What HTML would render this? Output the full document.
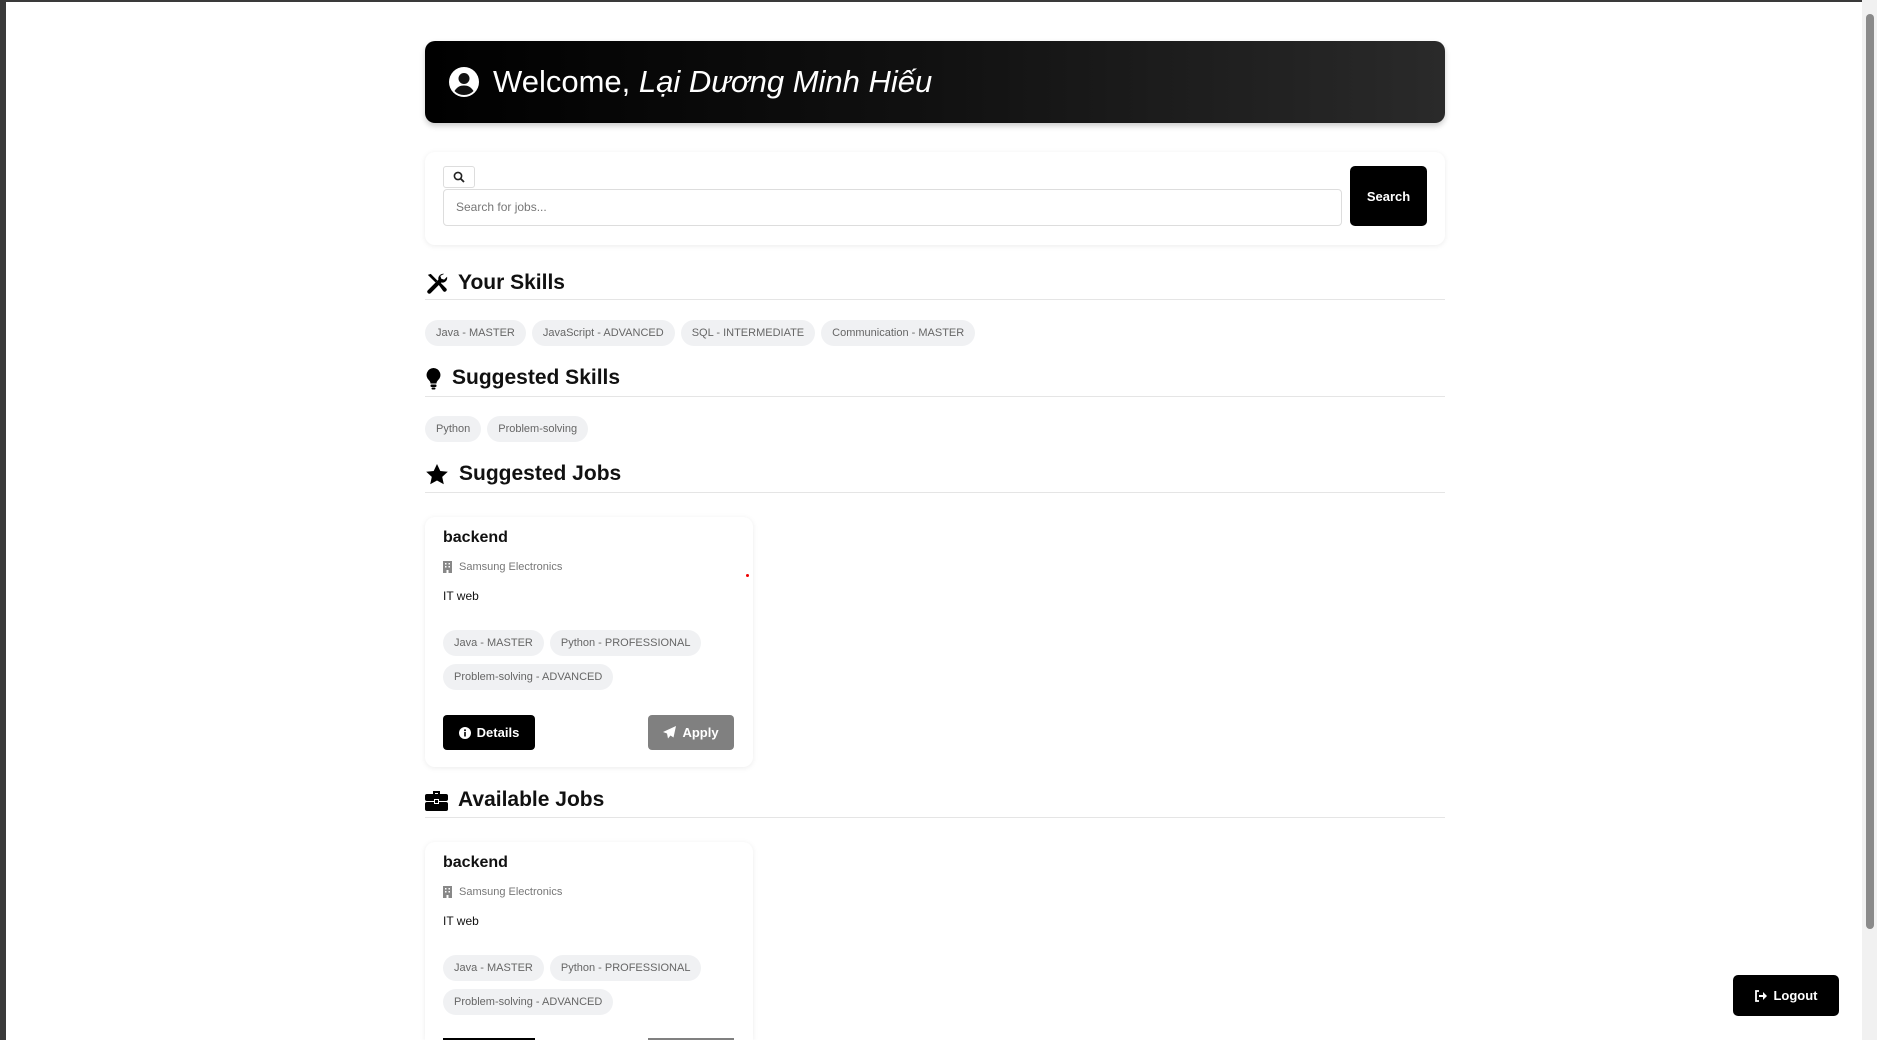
<!DOCTYPE html>
<html style="width:1877px;height:1040px;overflow:hidden"><head><meta charset="utf-8"><style>
*{box-sizing:border-box;margin:0;padding:0}
body{width:1877px;height:1040px;overflow:hidden;background:#fff;font-family:"Liberation Sans","Noto Sans CJK SC",sans-serif;color:#111;position:relative}
.frameL{position:absolute;left:0;top:0;width:6px;height:1040px;background:#3a3a3a}
.frameT{position:absolute;left:0;top:0;width:1877px;height:2px;background:#3a3a3a}
.sb{position:absolute;right:0;top:0;width:15px;height:1040px;background:#f1f1f1}
.sb .th{position:absolute;left:4px;top:14px;width:8px;height:915px;background:#8a8a8a;border-radius:4px}
.a{position:absolute}
.hdr{left:425px;top:41px;width:1020px;height:82px;border-radius:10px;background:linear-gradient(90deg,#000 0%,#111 50%,#2a2a2a 100%);box-shadow:0 3px 6px rgba(0,0,0,.2);color:#fff;font-size:31px;display:flex;align-items:center;padding-left:23px}
.hdr i{font-style:italic}
.card{background:#fff;border-radius:10px;box-shadow:0 1px 6px rgba(0,0,0,.08)}
.h{font-size:21px;font-weight:bold;display:flex;align-items:center;gap:10px;left:425px}
.line{left:425px;width:1020px;height:1px;background:#e5e5e5}
.chips{display:flex;gap:6px;flex-wrap:wrap}
.chip{height:26px;line-height:26px;padding:0 11px;border-radius:13px;background:#f0f1f3;color:#666;font-size:11px;white-space:nowrap}
.jt{font-size:16px;font-weight:bold}
.btn{height:35px;border-radius:4px;color:#fff;font-size:13px;font-weight:bold;display:flex;align-items:center;justify-content:center;gap:6px}
</style></head><body>
<div class="frameT"></div><div class="frameL"></div>
<div class="sb"><div class="th"></div></div>

<div class="a hdr"><svg width="32" height="32" viewBox="0 0 32 32"><circle cx="16" cy="16" r="15" fill="#fff"/><circle cx="16" cy="12.5" r="5.5" fill="#111"/><path d="M6.5 25c2.5-4 5.5-5.5 9.5-5.5s7 1.5 9.5 5.5c-2.5 2.6-5.8 4-9.5 4s-7-1.4-9.5-4z" fill="#111"/></svg><span style="margin-left:13px">Welcome, <i>Lại Dương Minh Hiếu</i></span></div>

<div class="a card" style="left:425px;top:152px;width:1020px;height:93px"></div>
<div class="a" style="left:443px;top:166px;width:32px;height:22px;border:1px solid #ddd;border-radius:3px;display:flex;align-items:center;justify-content:center"><svg width="12" height="12" viewBox="0 0 12 12"><circle cx="5" cy="5" r="3.6" fill="none" stroke="#222" stroke-width="1.6"/><path d="M7.6 7.6L11 11" stroke="#222" stroke-width="1.8"/></svg></div>
<div class="a" style="left:443px;top:189px;width:899px;height:37px;border:1px solid #ddd;border-radius:4px;font-size:12px;color:#777;line-height:35px;padding-left:12px">Search for jobs...</div>
<div class="a btn" style="left:1350px;top:166px;width:77px;height:60px;background:#000;border-radius:5px">Search</div>

<div class="a h" style="top:271px"><svg width="23" height="23" viewBox="0 0 24 24"><path d="M3 3l3-1 7 7-2 2-7-7z M14 13l2-2 6 6a2 2 0 01-3 3z" fill="#000"/><path d="M20 2a5 5 0 00-6 6L3 19a2 2 0 003 3L17 11a5 5 0 006-6l-3 3-3-1-1-3z" fill="#000"/></svg>Your Skills</div>
<div class="a line" style="top:299px"></div>
<div class="a chips" style="left:425px;top:320px"><span class="chip">Java - MASTER</span><span class="chip">JavaScript - ADVANCED</span><span class="chip">SQL - INTERMEDIATE</span><span class="chip">Communication - MASTER</span></div>

<div class="a h" style="top:366px"><svg width="17" height="23" viewBox="0 0 17 23"><path d="M8.5 1a7 7 0 00-4.5 12.3c1 1 1.5 2 1.5 3.2h6c0-1.2.5-2.2 1.5-3.2A7 7 0 008.5 1z" fill="#000"/><rect x="5.5" y="17.5" width="6" height="2.5" rx="1" fill="#000"/><rect x="6.5" y="20.5" width="4" height="2" rx="1" fill="#000"/></svg>Suggested Skills</div>
<div class="a line" style="top:396px"></div>
<div class="a chips" style="left:425px;top:416px"><span class="chip">Python</span><span class="chip">Problem-solving</span></div>

<div class="a h" style="top:462px"><svg width="24" height="23" viewBox="0 0 24 23"><path d="M12 1l3.3 7 7.5.8-5.6 5.1 1.6 7.4L12 17.5l-6.8 3.8 1.6-7.4L1.2 8.8 8.7 8z" fill="#000"/></svg>Suggested Jobs</div>
<div class="a line" style="top:492px"></div>

<div class="a card" style="left:425px;top:517px;width:328px;height:250px;padding:0 18px">
<div class="jt" style="margin-top:12px">backend</div>
<div style="font-size:11px;color:#777;margin-top:14px;display:flex;align-items:center;gap:7px"><svg width="9" height="12" viewBox="0 0 9 12"><rect width="9" height="12" fill="#888"/><g fill="#fff"><rect x="2" y="2" width="1.5" height="1.5"/><rect x="5.5" y="2" width="1.5" height="1.5"/><rect x="2" y="5" width="1.5" height="1.5"/><rect x="5.5" y="5" width="1.5" height="1.5"/><rect x="3.5" y="9" width="2" height="3"/></g></svg>Samsung Electronics</div>
<div style="font-size:12px;margin-top:16px">IT web</div>
<div class="chips" style="margin-top:27px;row-gap:8px"><span class="chip">Java - MASTER</span><span class="chip">Python - PROFESSIONAL</span><span class="chip">Problem-solving - ADVANCED</span></div>
</div>
<div class="a" style="left:746px;top:574px;width:3px;height:3px;border-radius:50%;background:#e00"></div>
<div class="a btn" style="left:443px;top:715px;width:92px;background:#000"><svg width="12" height="12" viewBox="0 0 12 12"><circle cx="6" cy="6" r="6" fill="#fff"/><rect x="5.2" y="5" width="1.6" height="4.5" fill="#000"/><circle cx="6" cy="3.2" r="1" fill="#000"/></svg>Details</div>
<div class="a btn" style="left:648px;top:715px;width:86px;background:#808080"><svg width="13" height="13" viewBox="0 0 13 13"><path d="M13 0L0 6l4 1.5 1 5 2.5-3 3 2z" fill="#fff"/></svg>Apply</div>

<div class="a h" style="top:788px"><svg width="23" height="21" viewBox="0 0 23 21"><path d="M8 1h7v3h-2V3H10v1H8z" fill="#000"/><rect y="4" width="23" height="7" rx="2" fill="#000"/><rect y="12" width="23" height="9" rx="2" fill="#000"/><rect x="9.5" y="9.5" width="4" height="4" fill="#000" stroke="#fff"/></svg>Available Jobs</div>
<div class="a line" style="top:817px"></div>

<div class="a card" style="left:425px;top:842px;width:328px;height:198px;padding:0 18px;border-radius:10px 10px 0 0">
<div class="jt" style="margin-top:12px">backend</div>
<div style="font-size:11px;color:#777;margin-top:14px;display:flex;align-items:center;gap:7px"><svg width="9" height="12" viewBox="0 0 9 12"><rect width="9" height="12" fill="#888"/><g fill="#fff"><rect x="2" y="2" width="1.5" height="1.5"/><rect x="5.5" y="2" width="1.5" height="1.5"/><rect x="2" y="5" width="1.5" height="1.5"/><rect x="5.5" y="5" width="1.5" height="1.5"/><rect x="3.5" y="9" width="2" height="3"/></g></svg>Samsung Electronics</div>
<div style="font-size:12px;margin-top:16px">IT web</div>
<div class="chips" style="margin-top:27px;row-gap:8px"><span class="chip">Java - MASTER</span><span class="chip">Python - PROFESSIONAL</span><span class="chip">Problem-solving - ADVANCED</span></div>
</div>
<div class="a" style="left:443px;top:1038px;width:92px;height:2px;background:#000"></div>
<div class="a" style="left:648px;top:1038px;width:86px;height:2px;background:#808080"></div>

<div class="a btn" style="left:1733px;top:975px;width:106px;height:41px;background:#000;border-radius:5px"><svg width="13" height="12" viewBox="0 0 13 12"><path d="M5 1H2v10h3" fill="none" stroke="#fff" stroke-width="1.8"/><path d="M5 5h4V2l4 4-4 4V7H5z" fill="#fff"/></svg>Logout</div>
</body></html>
